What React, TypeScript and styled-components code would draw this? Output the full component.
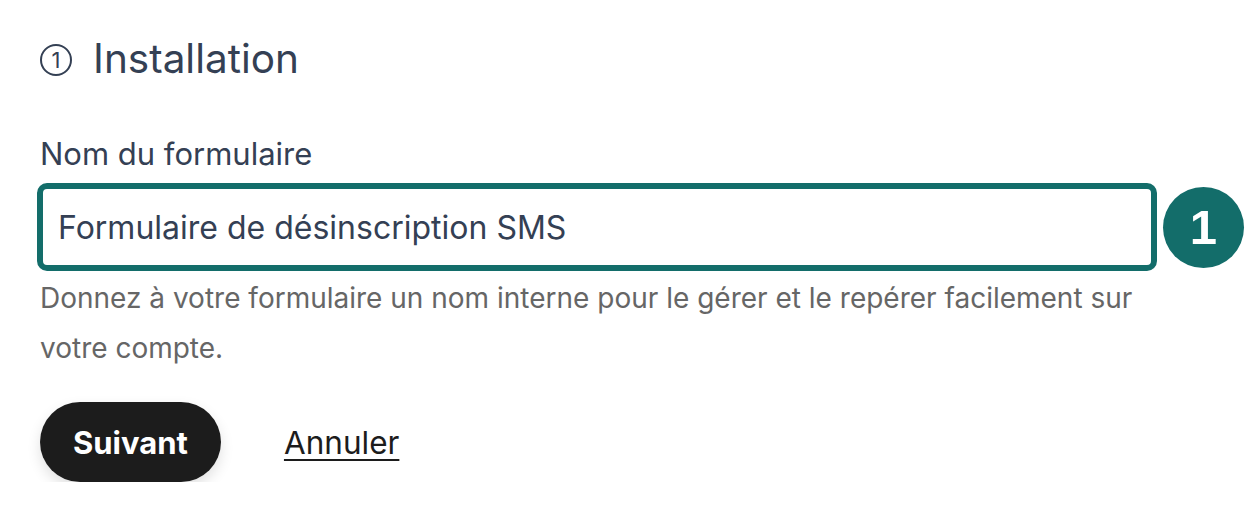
import React from "react";
import styled, { createGlobalStyle } from "styled-components";

const GlobalStyle = createGlobalStyle`
  html, body {
    margin: 0;
    padding: 0;
    background: #fff;
    font-family: Inter, "Noto Sans", sans-serif;
  }
`;

const teal = "#136d6a";

const Page = styled.div`
  padding: 32px 0 0 40px;
  width: 1254px;
  box-sizing: border-box;
`;

const Title = styled.h2`
  margin: 0;
  display: flex;
  align-items: center;
  gap: 21px;
  font-size: 40.5px;
  font-weight: 400;
  color: #344054;
  line-height: 54px;
`;

const StepMark = styled.span`
  box-sizing: border-box;
  width: 32px;
  height: 32px;
  border: 2px solid #344054;
  border-radius: 50%;
  display: inline-flex;
  align-items: center;
  justify-content: center;
  font-size: 22px;
  line-height: 1;
  margin-top: 2px;
`;

const Field = styled.div`
  margin-top: 48px;
`;

const Label = styled.label`
  display: block;
  font-size: 31px;
  color: #344054;
  line-height: 40px;
  margin-bottom: 9px;
`;

const InputRow = styled.div`
  display: flex;
  align-items: center;
  gap: 6px;
`;

const Input = styled.input`
  box-sizing: border-box;
  width: 1120px;
  height: 88px;
  border: 6px solid ${teal};
  border-radius: 10px;
  padding: 0 15px;
  font-family: Inter, "Noto Sans", sans-serif;
  font-size: 32px;
  color: #344054;
  outline: none;
  margin-left: -3px;
`;

const Badge = styled.div`
  width: 81px;
  height: 81px;
  border-radius: 50%;
  background: ${teal};
  color: #fff;
  display: flex;
  align-items: center;
  justify-content: center;
  font-family: "Liberation Sans", Arial, sans-serif;
  font-size: 49px;
  font-weight: 700;
`;

const Help = styled.p`
  margin: 2px 0 0;
  width: 1115px;
  font-size: 28px;
  line-height: 50px;
  color: #666666;
`;

const Actions = styled.div`
  display: flex;
  align-items: center;
  gap: 63px;
  margin-top: 29px;
`;

const PrimaryButton = styled.button`
  height: 80px;
  padding: 0 33px;
  border: none;
  border-radius: 40px;
  background: #1c1c1c;
  color: #fff;
  font-family: Inter, "Noto Sans", sans-serif;
  font-size: 31px;
  font-weight: 700;
  box-shadow: 0 6px 14px rgba(0, 0, 0, 0.12);
  cursor: pointer;
`;

const LinkButton = styled.a`
  font-size: 31.5px;
  color: #1c1c1c;
  text-decoration: underline;
  text-underline-offset: 5px;
  text-decoration-thickness: 2px;
  cursor: pointer;
`;

export default function App() {
  return (
    <>
      <GlobalStyle />
      <Page>
        <Title>
          <StepMark>1</StepMark>
          Installation
        </Title>
        <Field>
          <Label htmlFor="form-name">Nom du formulaire</Label>
          <InputRow>
            <Input id="form-name" defaultValue="Formulaire de désinscription SMS" />
            <Badge>1</Badge>
          </InputRow>
          <Help>
            Donnez à votre formulaire un nom interne pour le gérer et le repérer facilement sur
            votre compte.
          </Help>
        </Field>
        <Actions>
          <PrimaryButton>Suivant</PrimaryButton>
          <LinkButton>Annuler</LinkButton>
        </Actions>
      </Page>
    </>
  );
}
